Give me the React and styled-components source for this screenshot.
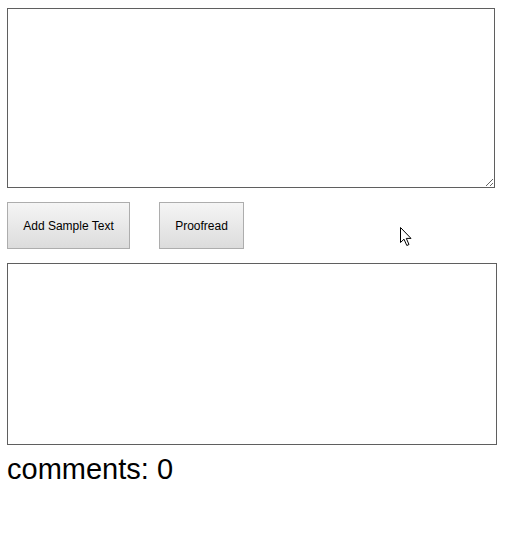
import React, { useState } from "react";
import styled, { createGlobalStyle } from "styled-components";

const GlobalStyle = createGlobalStyle`
  html, body {
    margin: 0;
    padding: 0;
    background: #ffffff;
  }
`;

const Page = styled.div`
  position: relative;
  padding: 8px 0 0 7px;
  font-family: "Liberation Sans", Arial, sans-serif;
  color: #000;
`;

const Input = styled.textarea`
  display: block;
  box-sizing: border-box;
  width: 488px;
  height: 180px;
  margin: 0;
  padding: 2px;
  border: 1px solid #5f5f5f;
  border-radius: 0;
  font-family: "Liberation Mono", monospace;
  font-size: 13px;
  outline: none;
  resize: both;
`;

const Toolbar = styled.div`
  display: flex;
  gap: 29px;
  margin: 14px 0;
`;

const Button = styled.button`
  box-sizing: border-box;
  width: ${(props) => props.w}px;
  height: 47px;
  margin: 0;
  padding: 0;
  border: 1px solid #adadad;
  border-radius: 0;
  background: linear-gradient(#f5f5f5, #dcdcdc);
  font-family: "Liberation Sans", Arial, sans-serif;
  font-size: 12px;
  color: #000;
  cursor: default;
`;

const Output = styled.div`
  box-sizing: border-box;
  width: 490px;
  height: 182px;
  border: 1px solid #5f5f5f;
`;

const Count = styled.div`
  margin-top: 8px;
  font-size: 29px;
  line-height: 33px;
`;

const Pointer = styled.svg`
  position: absolute;
  left: 400px;
  top: 227px;
`;

const App = () => {
  const [text, setText] = useState("");
  const [comments, setComments] = useState(0);

  return (
    <Page>
      <GlobalStyle />
      <Input value={text} onChange={(e) => setText(e.target.value)} />
      <Toolbar>
        <Button w={123} onClick={() => setText("This is a sample text.")}>
          Add Sample Text
        </Button>
        <Button w={85} onClick={() => setComments(0)}>
          Proofread
        </Button>
      </Toolbar>
      <Output />
      <Count>comments: {comments}</Count>
      <Pointer width="14" height="20" viewBox="0 0 14 20">
        <path
          d="M0.5 0.5 L0.5 15.5 L4 12.2 L6.8 18.5 L9 17.5 L6.3 11.4 L11 11.4 Z"
          fill="#fff"
          stroke="#000"
          strokeWidth="1"
          strokeLinejoin="miter"
        />
      </Pointer>
    </Page>
  );
};

export default App;
